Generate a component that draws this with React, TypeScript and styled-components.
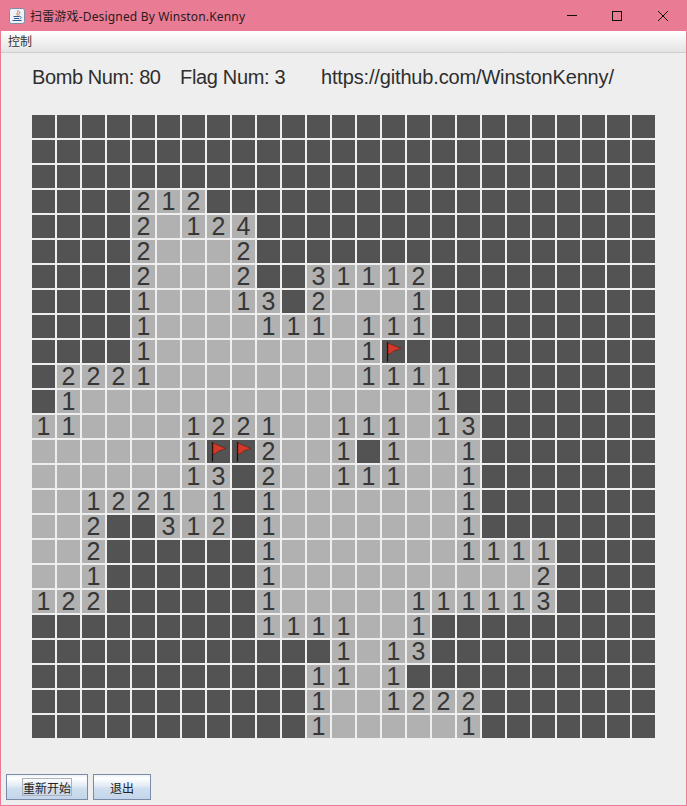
import React from 'react';
import styled, { createGlobalStyle } from 'styled-components';

const Global = createGlobalStyle`
  html, body { margin: 0; padding: 0; background: #eeeeee; }
  #root { width: 687px; height: 806px; }
`;

const BOARD = [
  '#########################',
  '#########################',
  '#########################',
  '####212##################',
  '####2.124################',
  '####2...2################',
  '####2...2##31112#########',
  '####1...13#2...1#########',
  '####1....111.111#########',
  '####1........1F##########',
  '#2221........1111########',
  '#1..............1########',
  '11....1221..111.13#######',
  '......1FF2..1#1..1#######',
  '......13#2..111..1#######',
  '..1221.1#1.......1#######',
  '..2##312#1.......1#######',
  '..2######1.......1111####',
  '..1######1..........2####',
  '122######1.....111113####',
  '#########1111..1#########',
  '############1.13#########',
  '###########11.1##########',
  '###########1..1222#######',
  '###########1.....1#######',
];

const Frame = styled.div`
  box-sizing: border-box;
  width: 687px;
  height: 806px;
  display: flex;
  flex-direction: column;
  background: #eeeeee;
  border: 1px solid #e97c94;
  border-top: none;
  overflow: hidden;
`;

const TitleBar = styled.div`
  height: 31px;
  flex: none;
  margin: 0 -1px;
  display: flex;
  align-items: center;
  background: #e97c94;
  padding: 0 1px 0 9px;
  font: 12px "Noto Sans", "Noto Sans CJK SC", sans-serif;
  color: #2a1a20;
`;

const TitleText = styled.span`
  margin-left: 5px;
  flex: 1;
  white-space: pre;
  letter-spacing: 0.17px;
`;

const WinButton = styled.div`
  width: 46px;
  height: 31px;
  display: flex;
  align-items: center;
  justify-content: center;
`;

const MenuBar = styled.div`
  height: 21px;
  flex: none;
  display: flex;
  align-items: center;
  padding: 0 0 2px 7px;
  box-sizing: content-box;
  height: 19px;
  background: linear-gradient(#ffffff, #e4e4e4);
  border-bottom: 1px solid #cfcfcf;
  font: 12px "Noto Sans CJK SC", sans-serif;
  color: #333;
`;

const Stats = styled.div`
  height: 62px;
  flex: none;
  padding: 12px 0 0 31px;
  box-sizing: border-box;
  font: 20px/24px "Liberation Sans", Arial, sans-serif;
  color: #2e2e2e;
  display: flex;
  white-space: pre;
`;

const StatText = styled.span<{ $track: number; $width: number }>`
  width: ${p => p.$width}px;
  letter-spacing: ${p => p.$track}px;
`;

const Board = styled.div`
  margin-left: 31px;
  display: grid;
  grid-template-columns: repeat(25, 23px);
  grid-auto-rows: 23px;
  gap: 2px;
`;

const Cell = styled.div<{ $open: boolean }>`
  background: ${p => (p.$open ? '#b1b1b1' : '#535353')};
  display: flex;
  align-items: center;
  justify-content: center;
  font: 25px/23px "Liberation Sans", Arial, sans-serif;
  color: #363636;
`;

const Buttons = styled.div`
  margin-top: 36px;
  padding-left: 5px;
  display: flex;
  gap: 5px;
`;

const Button = styled.div<{ $w: number }>`
  box-sizing: border-box;
  width: ${p => p.$w}px;
  height: 26px;
  border: 1px solid #7a8aa8;
  background: linear-gradient(#eef3f9 0%, #ffffff 14%, #dfe9f4 48%, #cfdff0 55%, #c3d5ea 100%);
  display: flex;
  align-items: center;
  justify-content: center;
  font: 12px "Noto Sans CJK SC", sans-serif;
  color: #222;
`;

const Focus = styled.span`
  box-sizing: border-box;
  display: flex;
  align-items: center;
  height: 18px;
  width: 50px;
  justify-content: center;
  border: 1px solid #adb1b8;
`;

const Flag = () => (
  <svg width="23" height="23" viewBox="0 0 23 23">
    <path d="M5.5 2 L5.5 21.5" stroke="#111" strokeWidth="1.2" fill="none" />
    <path d="M6 3 L19 8.5 L12 11 L8 14 L6 14 Z" fill="#d33a2a" stroke="#6b1e16" strokeWidth="0.7" />
  </svg>
);

const JavaIcon = () => (
  <svg width="16" height="16" viewBox="0 0 16 16">
    <rect x="0.5" y="0.5" width="15" height="15" rx="2" fill="#eef2f8" stroke="#7d8da8" />
    <path d="M8.5 2 C10.5 4 6.5 5 8.5 7.5 M10.5 3.5 C11.5 5 9 6 10 7.5" stroke="#d9622b" strokeWidth="1" fill="none" />
    <path d="M4.5 8.5 H10 M5 10.5 H10 M3.5 12.5 H12.5" stroke="#2c5a94" strokeWidth="1.1" fill="none" />
    <path d="M10 8.5 C13 8 13 10.5 10.5 11" stroke="#2c5a94" strokeWidth="0.8" fill="none" />
  </svg>
);

export default function App() {
  return (
    <>
      <Global />
      <Frame>
        <TitleBar>
          <JavaIcon />
          <TitleText>扫雷游戏-Designed By Winston.Kenny</TitleText>
          <WinButton>
            <svg width="12" height="12" viewBox="0 0 12 12"><path d="M2 5.5H12" stroke="#111" /></svg>
          </WinButton>
          <WinButton>
            <svg width="12" height="12" viewBox="0 0 12 12"><rect x="1.5" y="1.5" width="9" height="9" fill="none" stroke="#111" /></svg>
          </WinButton>
          <WinButton>
            <svg width="12" height="12" viewBox="0 0 12 12"><path d="M1 1L11 11M11 1L1 11" stroke="#111" /></svg>
          </WinButton>
        </TitleBar>
        <MenuBar>控制</MenuBar>
        <Stats>
          <StatText $track={-0.4} $width={148}>Bomb Num: 80</StatText>
          <StatText $track={-0.33} $width={141}>Flag Num: 3</StatText>
          <StatText $track={-0.16} $width={300}>https://github.com/WinstonKenny/</StatText>
        </Stats>
        <Board>
          {BOARD.flatMap((row, r) =>
            row.split('').map((c, i) => (
              <Cell key={`${r}-${i}`} $open={c !== '#' && c !== 'F'}>
                {c === 'F' ? <Flag /> : c === '.' || c === '#' ? '' : c}
              </Cell>
            )),
          )}
        </Board>
        <Buttons>
          <Button $w={82}><Focus>重新开始</Focus></Button>
          <Button $w={58}>退出</Button>
        </Buttons>
      </Frame>
    </>
  );
}
